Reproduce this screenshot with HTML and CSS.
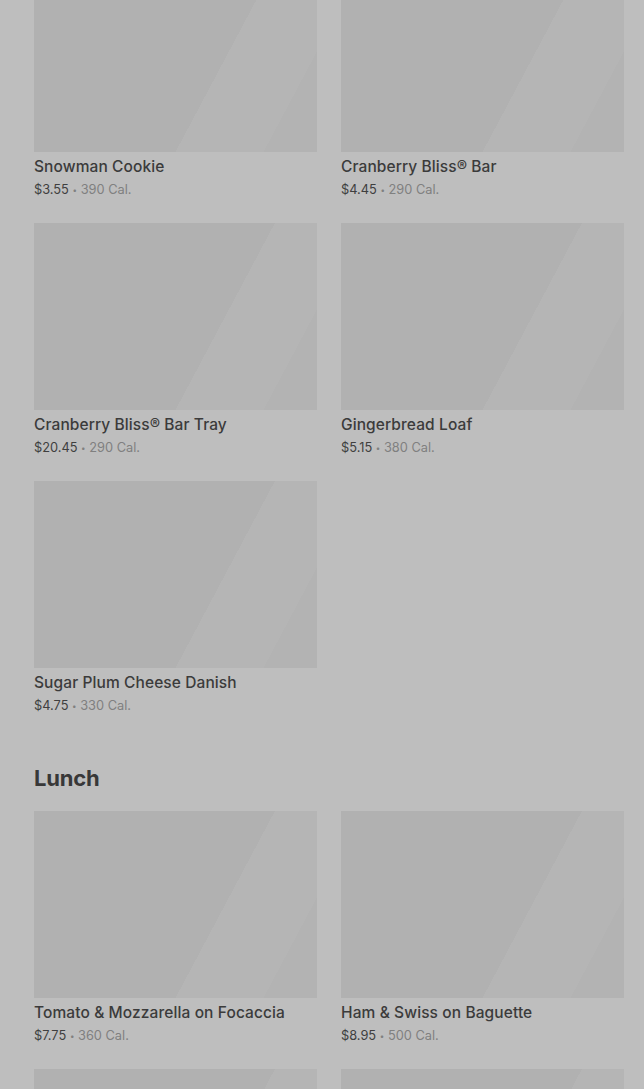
FILE: index.html
```html
<!DOCTYPE html>
<html lang="en">
<head>
<meta charset="utf-8">
<title>Menu</title>
<link rel="stylesheet" href="styles.css">
</head>
<body>
<main class="page">
  <section class="section first">
    <div class="grid">
      <article class="card">
        <div class="thumb"></div>
        <h3 class="name">Snowman Cookie</h3>
        <p class="meta"><span class="price">$3.55</span> <span class="dot">•</span> <span class="cal">390 Cal.</span></p>
      </article>
      <article class="card">
        <div class="thumb"></div>
        <h3 class="name">Cranberry Bliss® Bar</h3>
        <p class="meta"><span class="price">$4.45</span> <span class="dot">•</span> <span class="cal">290 Cal.</span></p>
      </article>
      <article class="card">
        <div class="thumb"></div>
        <h3 class="name">Cranberry Bliss® Bar Tray</h3>
        <p class="meta"><span class="price">$20.45</span> <span class="dot">•</span> <span class="cal">290 Cal.</span></p>
      </article>
      <article class="card">
        <div class="thumb"></div>
        <h3 class="name">Gingerbread Loaf</h3>
        <p class="meta"><span class="price">$5.15</span> <span class="dot">•</span> <span class="cal">380 Cal.</span></p>
      </article>
      <article class="card">
        <div class="thumb"></div>
        <h3 class="name">Sugar Plum Cheese Danish</h3>
        <p class="meta"><span class="price">$4.75</span> <span class="dot">•</span> <span class="cal">330 Cal.</span></p>
      </article>
    </div>
  </section>
  <section class="section">
    <h2 class="heading">Lunch</h2>
    <div class="grid">
      <article class="card">
        <div class="thumb"></div>
        <h3 class="name">Tomato &amp; Mozzarella on Focaccia</h3>
        <p class="meta"><span class="price">$7.75</span> <span class="dot">•</span> <span class="cal">360 Cal.</span></p>
      </article>
      <article class="card">
        <div class="thumb"></div>
        <h3 class="name">Ham &amp; Swiss on Baguette</h3>
        <p class="meta"><span class="price">$8.95</span> <span class="dot">•</span> <span class="cal">500 Cal.</span></p>
      </article>
      <article class="card">
        <div class="thumb"></div>
        <h3 class="name">Turkey &amp; Havarti Sandwich</h3>
        <p class="meta"><span class="price">$7.95</span> <span class="dot">•</span> <span class="cal">520 Cal.</span></p>
      </article>
      <article class="card">
        <div class="thumb"></div>
        <h3 class="name">Chicken &amp; Bacon on Brioche</h3>
        <p class="meta"><span class="price">$8.45</span> <span class="dot">•</span> <span class="cal">600 Cal.</span></p>
      </article>
    </div>
  </section>
</main>
</body>
</html>
```
FILE: styles.css
```css
html, body {
  margin: 0;
  padding: 0;
  background: #bebebe;
  overflow: hidden;
}
body {
  font-family: Inter, "Liberation Sans", sans-serif;
  color: #3b3b3b;
}
.page {
  padding: 0 20px 0 34px;
  margin-top: -35px;
}
.section.first {
  margin-bottom: 48px;
}
.heading {
  margin: 0 0 18px;
  font-size: 22px;
  line-height: 30px;
  font-weight: 700;
  color: #383838;
  letter-spacing: -0.2px;
}
.grid {
  display: grid;
  grid-template-columns: 1fr 1fr;
  column-gap: 24px;
  row-gap: 24px;
}
.card {
  margin: 0;
}
.thumb {
  height: 187px;
  background: linear-gradient(118deg, #b1b1b1 0%, #b1b1b1 63%, #b5b5b5 63%, #b5b5b5 86%, #b3b3b3 86%, #b3b3b3 100%);
}
.name {
  margin: 5px 0 0;
  height: 20px;
  font-size: 15.5px;
  line-height: 20px;
  font-weight: 500;
  color: #3b3b3b;
  letter-spacing: 0.1px;
  white-space: nowrap;
}
.meta {
  margin: 4px 0 0;
  height: 18px;
  font-size: 12.8px;
  line-height: 18px;
  color: #808080;
  white-space: nowrap;
}
.price {
  color: #3f3f3f;
}
.dot {
  font-size: 8px;
  line-height: 0;
  vertical-align: 1px;
  color: #808080;
}
.cal {
  color: #808080;
}
```
